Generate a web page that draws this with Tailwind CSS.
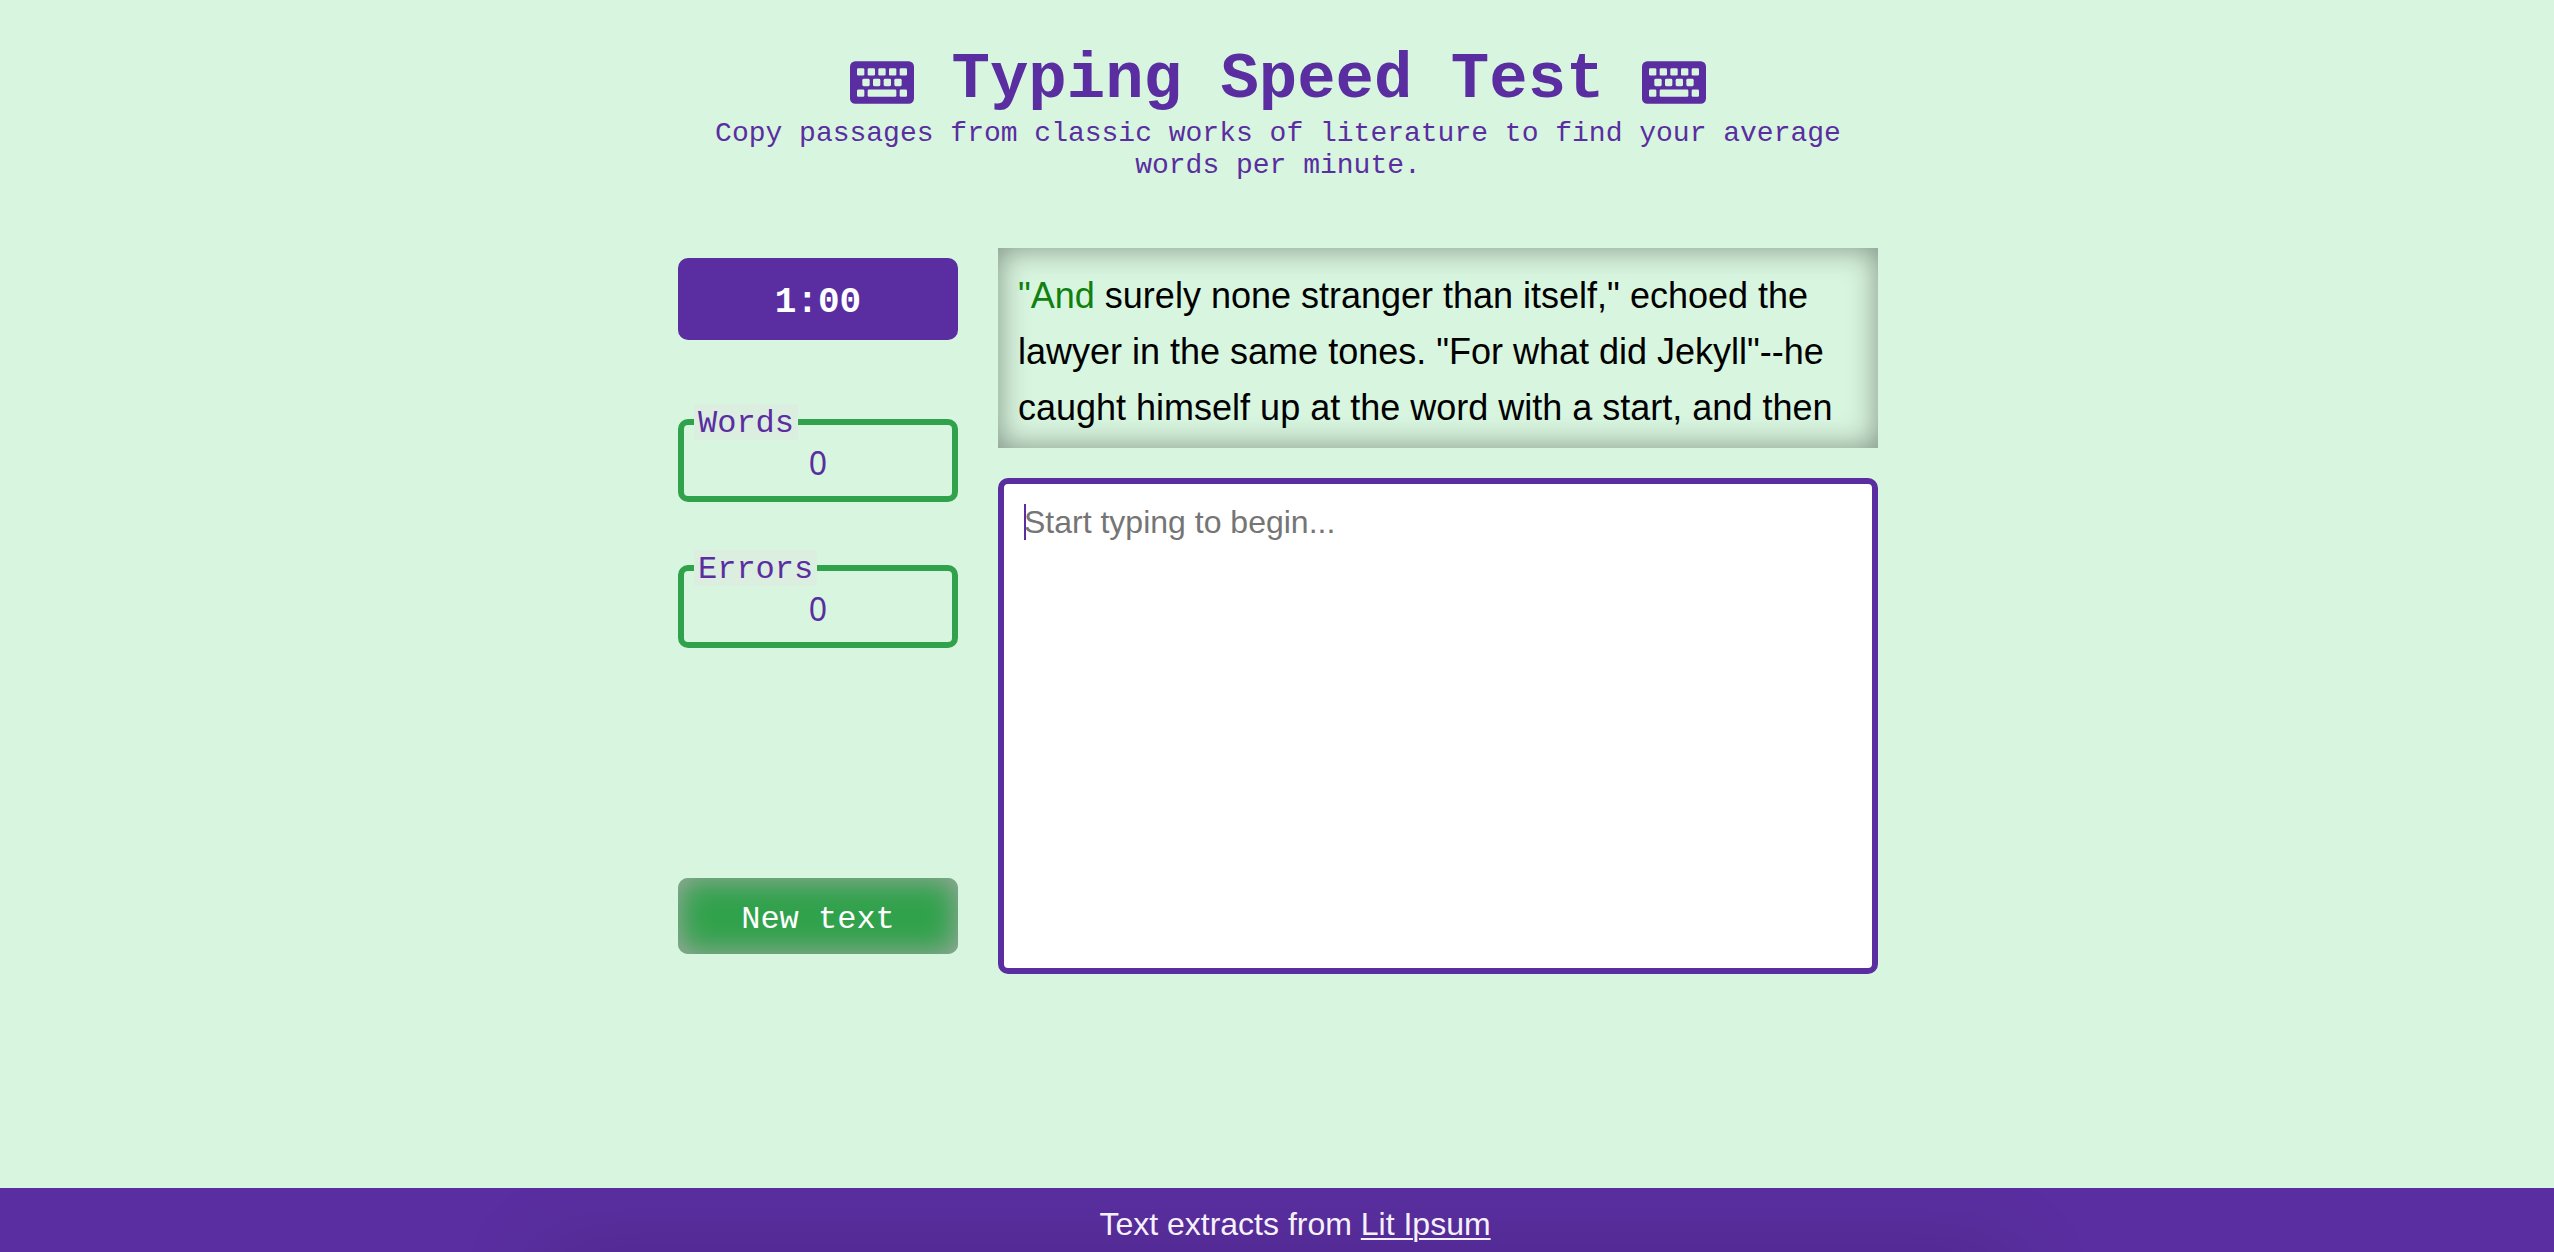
<!DOCTYPE html>
<html lang="en">
<head>
<meta charset="utf-8">
<meta name="viewport" content="width=device-width, initial-scale=1">
<title>Typing Speed Test</title>
<script src="https://cdn.jsdelivr.net/npm/@tailwindcss/browser@4"></script>
</head>
<body class="flex min-h-screen flex-col bg-[#d8f5df] pl-[2px] font-['Liberation_Mono',monospace] text-[#5a2ea0]">
<svg class="hidden" aria-hidden="true">
  <symbol id="keyboard" viewBox="0 0 192 128">
    <rect width="192" height="128" rx="16" fill="#5a2ea0"/>
    <g fill="#d8f5df">
      <rect x="21" y="21" width="22" height="22" rx="4"/><rect x="53" y="21" width="22" height="22" rx="4"/><rect x="85" y="21" width="22" height="22" rx="4"/><rect x="117" y="21" width="22" height="22" rx="4"/><rect x="149" y="21" width="22" height="22" rx="4"/>
      <rect x="37" y="53" width="22" height="22" rx="4"/><rect x="69" y="53" width="22" height="22" rx="4"/><rect x="101" y="53" width="22" height="22" rx="4"/><rect x="133" y="53" width="22" height="22" rx="4"/>
      <rect x="21" y="85" width="22" height="22" rx="4"/><rect x="53" y="85" width="86" height="22" rx="4"/><rect x="149" y="85" width="22" height="22" rx="4"/>
    </g>
  </symbol>
</svg>

<header class="mx-auto w-full max-w-[1200px] pt-11 text-center">
  <h1 class="flex items-end justify-center gap-[38px] text-[64px] leading-[72px] font-bold">
    <svg class="mb-3 h-[43px] w-16 shrink-0" aria-hidden="true"><use href="#keyboard"/></svg>
    <span>Typing Speed Test</span>
    <svg class="mb-3 h-[43px] w-16 shrink-0" aria-hidden="true"><use href="#keyboard"/></svg>
  </h1>
  <p class="mt-[2px] text-[28px] leading-8">Copy passages from classic works of literature to find your average words per minute.</p>
</header>

<main class="mx-auto mt-[66px] mb-16 grid w-full max-w-[1200px] grid-cols-[280px_minmax(0,1fr)] gap-10">
  <section class="flex flex-col pt-[10px] pb-5">
    <div role="timer" class="rounded-[10px] bg-[#5a2ea0] pt-6 pb-4 text-center text-4xl leading-[42px] font-bold text-white">1:00</div>
    <fieldset class="mt-16 rounded-[10px] border-6 border-[#31a24c] px-[10px] pb-[10px] text-center">
      <legend class="bg-[#dbeee0] px-1 pt-1 text-left text-[32px] leading-8">Words</legend>
      <output class="block font-['Noto_Sans',sans-serif] text-[32px] leading-[46px]">0</output>
    </fieldset>
    <fieldset class="mt-12 rounded-[10px] border-6 border-[#31a24c] px-[10px] pb-[10px] text-center">
      <legend class="bg-[#dbeee0] px-1 pt-1 text-left text-[32px] leading-8">Errors</legend>
      <output class="block font-['Noto_Sans',sans-serif] text-[32px] leading-[46px]">0</output>
    </fieldset>
    <button type="button" class="mt-auto rounded-[10px] bg-[#31a24c] pt-6 pb-4 text-[32px] leading-9 text-white shadow-[inset_0_0_30px_#a9a9a9]">New text</button>
  </section>

  <section class="flex flex-col gap-[30px] font-['Liberation_Sans',sans-serif]">
    <p class="h-[200px] overflow-hidden p-5 text-4xl leading-14 text-black shadow-[inset_0_0_30px_rgba(0,0,0,0.42)]"><span class="text-[#108010]">"And</span> surely none stranger than itself," echoed the lawyer in the same tones. "For what did Jekyll"--he caught himself up at the word with a start, and then</p>
    <div class="relative">
      <textarea aria-label="Typing area" placeholder="Start typing to begin..." class="block h-[496px] w-full resize-none rounded-[10px] border-6 border-[#5a2ea0] bg-white p-5 text-[32px] leading-9 outline-none placeholder:text-[#757575]"></textarea>
      <span class="absolute top-[26px] left-[26px] h-9 w-[2px] bg-[#5a2ea0]" aria-hidden="true"></span>
    </div>
  </section>
</main>

<footer class="relative mt-auto -ml-[2px] overflow-hidden bg-[#5a2ea0] pt-4 pb-2 pl-9 text-center font-['Liberation_Sans',sans-serif] text-[32px] leading-10 text-white">
  <div class="absolute inset-x-[540px] top-full h-20 shadow-[0_0_90px_rgba(0,0,0,0.14)]" aria-hidden="true"></div>
  <p class="relative text-[#f5f1fa]">Text extracts from <a href="#" class="underline decoration-2 underline-offset-3">Lit Ipsum</a></p>
</footer>
</body>
</html>
